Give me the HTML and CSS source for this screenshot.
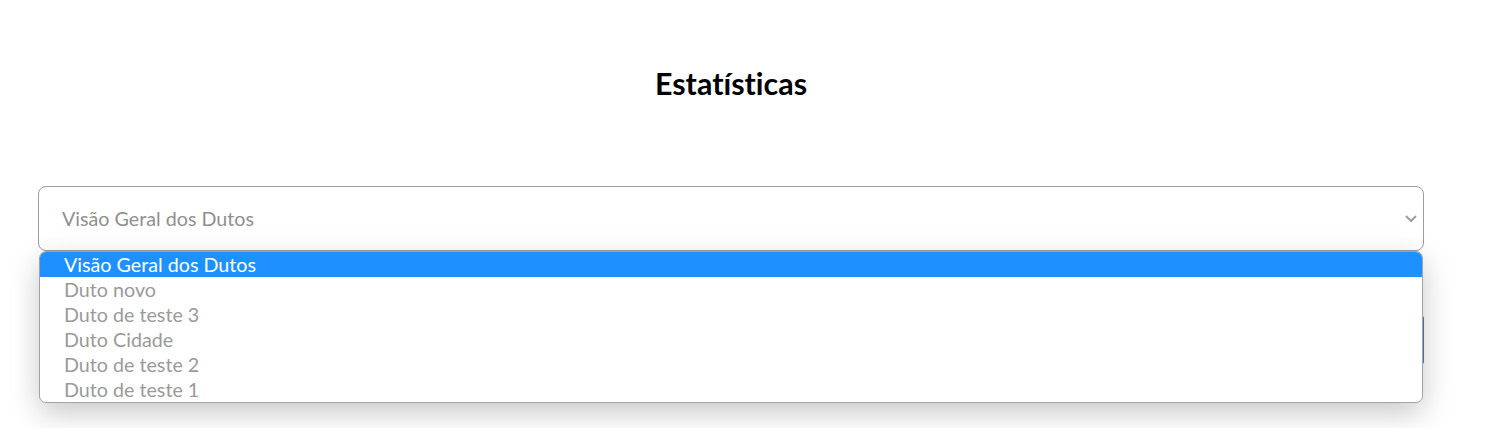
FILE: index.html
```html
<!DOCTYPE html>
<html lang="pt-BR">
<head>
<meta charset="utf-8">
<title>Estatísticas</title>
<link rel="stylesheet" href="styles.css">
</head>
<body>
<main class="page">
  <h1 class="title">Estatísticas</h1>
  <div class="select-wrap">
    <div class="select">
      <span class="select-value">Visão Geral dos Dutos</span>
      <svg class="chevron" width="12" height="8" viewBox="0 0 12 8"><path d="M1.5 1.5 L6 6 L10.5 1.5" fill="none" stroke="#9a9a9a" stroke-width="1.8" stroke-linecap="round" stroke-linejoin="round"/></svg>
    </div>
    <ul class="options">
      <li class="option selected">Visão Geral dos Dutos</li>
      <li class="option">Duto novo</li>
      <li class="option">Duto de teste 3</li>
      <li class="option">Duto Cidade</li>
      <li class="option">Duto de teste 2</li>
      <li class="option">Duto de teste 1</li>
    </ul>
  </div>
  <div class="behind-button"></div>
</main>
</body>
</html>
```
FILE: styles.css
```css
* { box-sizing: border-box; }
html, body { margin: 0; padding: 0; background: #fff; }
body {
  font-family: Lato, "Noto Sans", sans-serif;
  min-height: 428px;
  overflow: hidden;
  font-variant-ligatures: none;
}
.page {
  width: 1386px;
  margin-left: 38px;
  padding-top: 63px;
  min-height: 428px;
}
.title {
  margin: 0;
  text-align: center;
  font-size: 30.4px;
  font-weight: 700;
  line-height: 40px;
  color: #000;
}
.select-wrap {
  position: relative;
  margin-top: 83px;
}
.select {
  height: 65px;
  border: 1px solid #9c9c9c;
  border-radius: 8px;
  display: flex;
  align-items: center;
  justify-content: space-between;
  padding: 0 6px 0 23px;
  background: #fff;
}
.select-value {
  font-size: 19.7px;
  color: #8f8f8f;
}
.options {
  position: absolute;
  top: 65px;
  left: 1px;
  right: 1px;
  margin: 0;
  padding: 0;
  list-style: none;
  background: #fff;
  border: 1px solid #a3a3a3;
  border-radius: 7px;
  overflow: hidden;
  box-shadow: 0 10px 30px rgba(0, 0, 0, 0.22);
  z-index: 2;
}
.option {
  height: 25px;
  line-height: 25px;
  padding-left: 24px;
  font-size: 19.7px;
  color: #9a9a9a;
}
.option.selected {
  background: #1e90ff;
  color: #fff;
}
.behind-button {
  margin-top: 64px;
  margin-left: 300px;
  height: 50px;
  background: #4f7fc0;
  border-radius: 0 4px 4px 0;
}
```
